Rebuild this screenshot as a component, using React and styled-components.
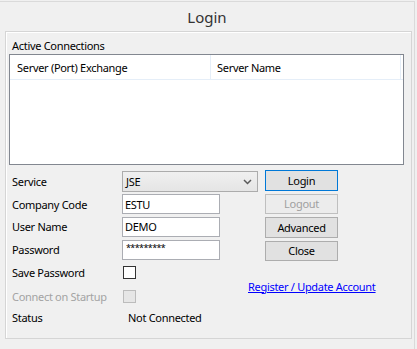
import React from 'react'
import styled, { createGlobalStyle } from 'styled-components'

const Global = createGlobalStyle`
  html, body {
    margin: 0;
    padding: 0;
    background: #f0f0f0;
  }
  body {
    font-family: "Noto Sans", "Liberation Sans", sans-serif;
    font-size: 11px;
    letter-spacing: -0.3px;
    color: #000;
  }
`

const Window = styled.div`
  width: 414px;
  height: 348px;
  margin-top: 1px;
  border-top: 1px solid #dadada;
  border-right: 1px solid #dadada;
  display: flex;
  flex-direction: column;
`

const Title = styled.div`
  height: 29px;
  flex-shrink: 0;
  display: flex;
  align-items: center;
  justify-content: center;
  font-size: 15px;
  letter-spacing: 0;
  color: #333;
`

const GroupBox = styled.div`
  margin-left: 5px;
  width: 402px;
  height: 306px;
  flex-shrink: 0;
  border: 1px solid #d5d5d5;
  box-shadow: inset 1px 1px 0 #fff;
  display: flex;
  flex-direction: column;
  padding: 0 0 0 3px;
`

const GroupLabel = styled.div`
  height: 21px;
  flex-shrink: 0;
  padding-left: 3px;
  display: flex;
  align-items: flex-end;
  line-height: 15px;
`

const ListBox = styled.div`
  width: 393px;
  height: 109px;
  margin-top: 1px;
  flex-shrink: 0;
  border: 1px solid #828790;
  background: #fff;
`

const HeaderRow = styled.div`
  display: flex;
  height: 24px;
  border-bottom: 1px solid #e5eef8;
`

const HeaderCell = styled.div`
  width: ${p => p.w}px;
  padding-left: ${p => p.pl}px;
  border-right: 1px solid #e5eef8;
  display: flex;
  align-items: center;
  box-sizing: border-box;
`

const Form = styled.div`
  margin-top: 5px;
  margin-left: 3px;
  display: grid;
  grid-template-columns: 103px 136px 73px;
  grid-template-rows: 23px 22px 23px 23px 23px 24px 18px;
  column-gap: 7px;
`

const Label = styled.div`
  grid-column: 1;
  display: flex;
  align-items: center;
  color: ${p => (p.disabled ? '#a3a3a3' : '#000')};
`

const Field = styled.div`
  grid-column: 2;
  display: flex;
  align-items: center;
`

const Combo = styled.div`
  width: 136px;
  height: 21px;
  box-sizing: border-box;
  border: 1px solid #acacac;
  background: linear-gradient(#f0f0f0, #e5e5e5);
  display: flex;
  align-items: center;
  justify-content: space-between;
  padding: 0 5px 0 3px;
`

const TextBox = styled.input`
  width: 98px;
  height: 20px;
  box-sizing: border-box;
  border: 1px solid #abadb3;
  background: #fff;
  font: inherit;
  font-size: ${p => (p.secret ? '9px' : 'inherit')};
  letter-spacing: ${p => (p.secret ? '-0.6px' : 'inherit')};
  color: #000;
  padding: ${p => (p.secret ? '0 0 4px 3px' : '0 0 0 2px')};
  margin: 0;
  outline: none;
`

const Check = styled.div`
  width: 13px;
  height: 13px;
  box-sizing: border-box;
  margin-left: 1px;
  border: 1px solid ${p => (p.disabled ? '#bcbcbc' : '#333')};
  background: ${p => (p.disabled ? '#e6e6e6' : '#fff')};
`

const StatusText = styled.div`
  grid-column: 2;
  display: flex;
  align-items: center;
  padding-left: 6px;
`

const Buttons = styled.div`
  grid-column: 3;
  grid-row: 1 / span 4;
  display: flex;
  flex-direction: column;
  gap: 3px;
`

const Button = styled.button`
  width: 73px;
  height: 21px;
  margin: 0;
  padding: 0;
  font: inherit;
  letter-spacing: inherit;
  box-sizing: border-box;
  border: 1px solid ${p => (p.primary ? '#0078d7' : p.disabled ? '#bfbfbf' : '#adadad')};
  background: ${p => (p.disabled ? '#ececec' : '#e1e1e1')};
  color: ${p => (p.disabled ? '#a0a0a0' : '#000')};
`

const Link = styled.a`
  grid-column: 3;
  grid-row: 5 / span 2;
  align-self: center;
  margin-left: -17px;
  padding-top: 3px;
  color: #0000ff;
  text-decoration: underline;
  white-space: nowrap;
`

const Chevron = () => (
  <svg width="9" height="6" viewBox="0 0 9 6">
    <path d="M1 1 L4.5 4.5 L8 1" fill="none" stroke="#5a5a5a" strokeWidth="1.5" />
  </svg>
)

const App = () => (
  <>
    <Global />
    <Window>
      <Title>Login</Title>
      <GroupBox>
        <GroupLabel>Active Connections</GroupLabel>
        <ListBox>
          <HeaderRow>
            <HeaderCell w={201} pl={7}>Server (Port) Exchange</HeaderCell>
            <HeaderCell w={190} pl={6}>Server Name</HeaderCell>
          </HeaderRow>
        </ListBox>
        <Form>
          <Label>Service</Label>
          <Field>
            <Combo>
              <span>JSE</span>
              <Chevron />
            </Combo>
          </Field>
          <Label>Company Code</Label>
          <Field><TextBox readOnly value="ESTU" /></Field>
          <Label>User Name</Label>
          <Field><TextBox readOnly value="DEMO" /></Field>
          <Label>Password</Label>
          <Field><TextBox readOnly secret value="*********" /></Field>
          <Label>Save Password</Label>
          <Field><Check /></Field>
          <Label disabled>Connect on Startup</Label>
          <Field><Check disabled /></Field>
          <Label>Status</Label>
          <StatusText>Not Connected</StatusText>
          <Buttons>
            <Button primary>Login</Button>
            <Button disabled>Logout</Button>
            <Button>Advanced</Button>
            <Button>Close</Button>
          </Buttons>
          <Link>Register / Update Account</Link>
        </Form>
      </GroupBox>
    </Window>
  </>
)

export default App
